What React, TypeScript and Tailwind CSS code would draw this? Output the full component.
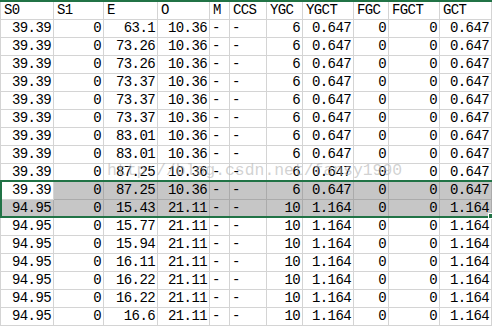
import React from "react";

const cols = [53, 50, 54, 52, 20, 37, 36, 51, 35, 51, 52];
const header = ["S0", "S1", "E", "O", "M", "CCS", "YGC", "YGCT", "FGC", "FGCT", "GCT"];
const eVals = ["63.1", "73.26", "73.26", "73.37", "73.37", "73.37", "83.01", "83.01", "87.25", "87.25", "15.43", "15.77", "15.94", "16.11", "16.22", "16.22", "16.6"];

const rows = eVals.map((e, i) => {
  const late = i >= 10;
  return late
    ? ["94.95", "0", e, "21.11", "-", "-", "10", "1.164", "0", "0", "1.164"]
    : ["39.39", "0", e, "10.36", "-", "-", "6", "0.647", "0", "0", "0.647"];
});

export default function App() {
  return (
    <div
      className="relative w-[492px] h-[326px] overflow-hidden bg-white text-black"
      style={{ fontFamily: '"Liberation Mono", "DejaVu Sans Mono", monospace' }}
    >
      <div className="h-[2px] bg-[#217346]" />
      <div
        className="grid border-l border-[#d4d4d4]"
        style={{ gridTemplateColumns: cols.map((c) => `${c}px`).join(" ") }}
      >
        {header.map((h, i) => (
          <div
            key={"h" + i}
            className="h-[18px] border-r border-b border-[#d4d4d4] pl-[3px] text-[14px] leading-[17px] tracking-[-0.6px] whitespace-nowrap overflow-hidden"
          >
            {h}
          </div>
        ))}
        {rows.map((r, ri) =>
          r.map((v, ci) => {
            const sel = ri === 9 || ri === 10;
            const active = ri === 9 && ci === 0;
            const left = ci === 4 || ci === 5;
            return (
              <div
                key={ri + "-" + ci}
                className={
                  "h-[18px] border-r border-b text-[14px] leading-[17px] tracking-[-0.6px] whitespace-nowrap overflow-hidden " +
                  (left ? "pl-[2px] text-left " : "pr-[2px] text-right ") +
                  (sel && !active ? "bg-[#c6c6c6] border-[#ababab]" : "bg-white border-[#d4d4d4]")
                }
              >
                {v}
              </div>
            );
          })
        )}
      </div>
      <div
        className="absolute left-[107px] top-[161px] text-[16.4px] leading-[20px] text-[#b4b4b4]/60 whitespace-nowrap pointer-events-none"
        style={{ fontFamily: '"Liberation Mono", monospace' }}
      >
        http://blog.csdn.net/fansy1990
      </div>
      <div className="absolute left-0 top-[180px] w-[520px] h-[38px] border-2 border-[#217346] pointer-events-none" />
      <div className="absolute left-[488px] top-[213px] w-[6px] h-[6px] bg-[#217346] border border-white" />
    </div>
  );
}
